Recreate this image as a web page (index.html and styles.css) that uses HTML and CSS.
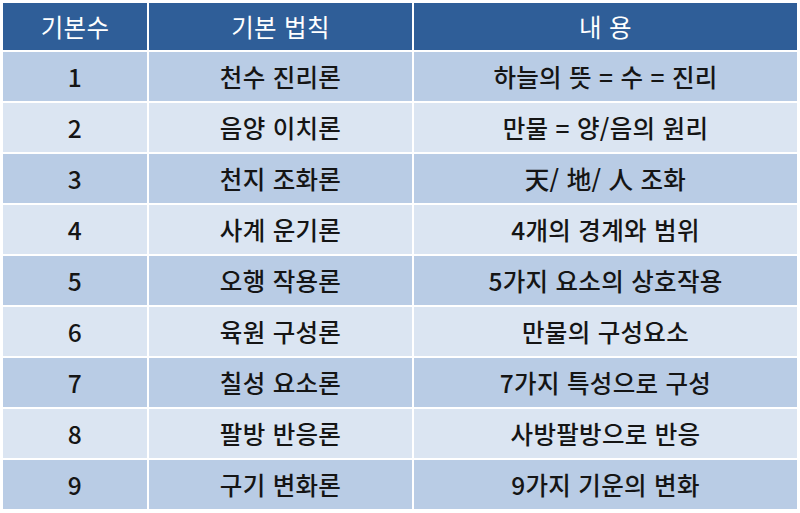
FILE: index.html
```html
<!DOCTYPE html>
<html lang="ko">
<head>
<meta charset="utf-8">
<link rel="stylesheet" href="styles.css">
</head>
<body>
<div class="table">
  <div class="cell head">기본수</div>
  <div class="cell head">기본 법칙</div>
  <div class="cell head">내 용</div>

  <div class="cell odd">1</div>
  <div class="cell odd">천수 진리론</div>
  <div class="cell odd">하늘의 뜻 = 수 = 진리</div>

  <div class="cell even">2</div>
  <div class="cell even">음양 이치론</div>
  <div class="cell even">만물 = 양/음의 원리</div>

  <div class="cell odd">3</div>
  <div class="cell odd">천지 조화론</div>
  <div class="cell odd">天/ 地/ 人 조화</div>

  <div class="cell even">4</div>
  <div class="cell even">사계 운기론</div>
  <div class="cell even">4개의 경계와 범위</div>

  <div class="cell odd">5</div>
  <div class="cell odd">오행 작용론</div>
  <div class="cell odd">5가지 요소의 상호작용</div>

  <div class="cell even">6</div>
  <div class="cell even">육원 구성론</div>
  <div class="cell even">만물의 구성요소</div>

  <div class="cell odd">7</div>
  <div class="cell odd">칠성 요소론</div>
  <div class="cell odd">7가지 특성으로 구성</div>

  <div class="cell even">8</div>
  <div class="cell even">팔방 반응론</div>
  <div class="cell even">사방팔방으로 반응</div>

  <div class="cell odd">9</div>
  <div class="cell odd">구기 변화론</div>
  <div class="cell odd">9가지 기운의 변화</div>
</div>
</body>
</html>
```
FILE: styles.css
```css
html, body {
  margin: 0;
  padding: 0;
  background: #ffffff;
}
body {
  width: 800px;
  height: 513px;
  overflow: hidden;
  padding: 3px 3px 0 3px;
  box-sizing: border-box;
  font-family: "Noto Sans CJK KR", "Noto Sans", sans-serif;
}
.table {
  display: grid;
  grid-template-columns: 144px 263px 1fr;
  grid-template-rows: 47px repeat(9, 49px);
  column-gap: 2px;
  row-gap: 2px;
  width: 794px;
}
.cell {
  display: flex;
  align-items: center;
  justify-content: center;
  font-size: 24.5px;
  font-weight: 500;
  color: #151515;
  letter-spacing: 0.3px;
}
.head {
  background: #2f5e98;
  color: #ffffff;
  font-weight: 400;
}
.odd {
  background: #b9cce5;
}
.even {
  background: #dbe5f2;
}
```
